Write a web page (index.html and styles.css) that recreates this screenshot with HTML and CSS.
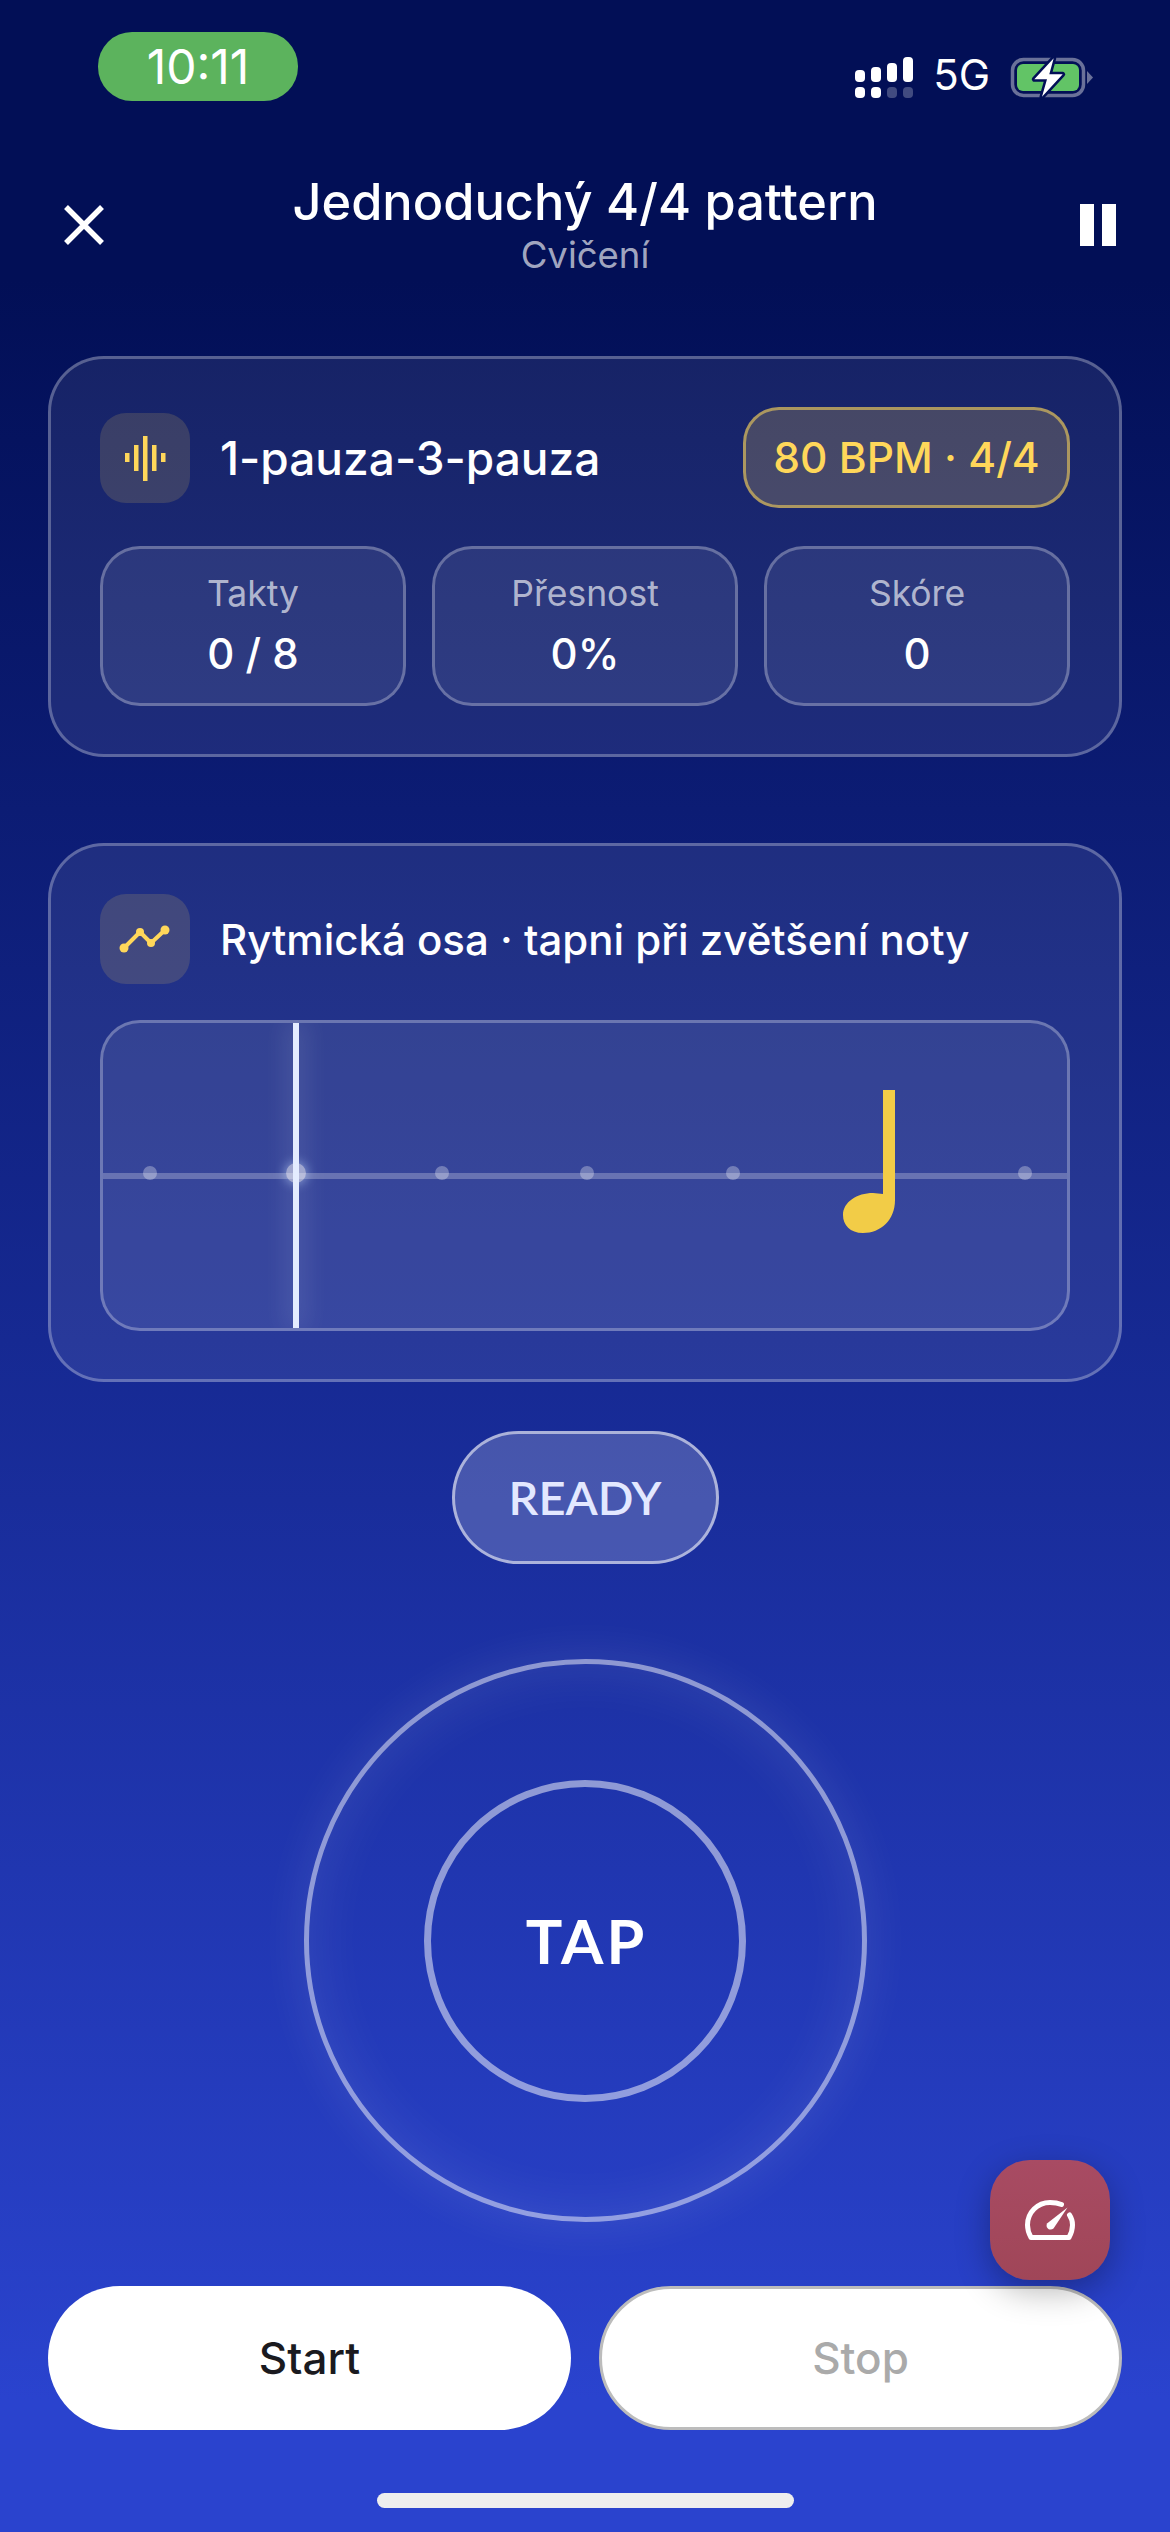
FILE: index.html
```html
<!DOCTYPE html>
<html>

<head>
	<meta charset="UTF-8">
	<title>Jednoduchý 4/4 pattern</title>
	<link rel="stylesheet" href="styles.css">
</head>

<body>
	<div class="screen">
		<div class="status">
			<div class="time">10:11</div>
			<div class="status-right">
				<svg class="signal" width="58" height="41" viewBox="0 0 58 41">
					<rect x="0" y="13" width="10" height="12" rx="4" fill="#fff" />
					<rect x="16" y="10" width="10" height="15" rx="4" fill="#fff" />
					<rect x="32" y="6" width="10" height="19" rx="4" fill="#fff" />
					<rect x="48" y="0" width="10" height="25" rx="4" fill="#fff" />
					<rect x="0" y="30" width="10" height="11" rx="4" fill="#fff" />
					<rect x="16" y="30" width="10" height="11" rx="4" fill="#fff" />
					<rect x="32" y="30" width="10" height="11" rx="4" fill="#fff" fill-opacity=".25" />
					<rect x="48" y="30" width="10" height="11" rx="4" fill="#fff" fill-opacity=".25" />
				</svg>
				<span class="net">5G</span>
				<svg class="battery" width="90" height="50" viewBox="0 0 90 50">
					<rect x="5.5" y="7.5" width="71" height="36" rx="11" fill="none" stroke="#6a7199" stroke-width="3.5" />
					<rect x="10" y="12" width="62" height="27" rx="6" fill="#62c466" />
					<path d="M80 19 L86 25.5 L80 32 Z" fill="#6a7199" />
					<path d="M46.7 6.3 L27.3 27.3 H40 L35 44.7 L55.7 22.3 H42.3 Z" fill="#fff" stroke="#020f56" stroke-width="5" stroke-linejoin="round" paint-order="stroke" />
				</svg>
			</div>
		</div>

		<div class="header">
			<svg class="close" width="42" height="42" viewBox="0 0 42 42">
				<path d="M3 3 L39 39 M39 3 L3 39" stroke="#fff" stroke-width="5.5" fill="none" />
			</svg>
			<div class="heading">
				<div class="heading-title">Jednoduchý 4/4 pattern</div>
				<div class="heading-sub">Cvičení</div>
			</div>
			<div class="pause"><span></span><span></span></div>
		</div>

		<div class="card">
			<div class="row">
				<div class="row-left">
					<div class="icon-box">
						<svg width="90" height="90" viewBox="0 0 90 90">
							<rect x="25" y="40" width="4.5" height="9" fill="#ffd75a" />
							<rect x="34" y="32" width="4.5" height="26" fill="#ffd75a" />
							<rect x="43" y="23" width="4.5" height="45" fill="#ffd75a" />
							<rect x="52" y="32" width="4.5" height="26" fill="#ffd75a" />
							<rect x="61" y="40" width="4.5" height="9" fill="#ffd75a" />
						</svg>
					</div>
					<div class="row-title">1-pauza-3-pauza</div>
				</div>
				<div class="chip">80 BPM · 4/4</div>
			</div>
			<div class="stats">
				<div class="stat">
					<div class="stat-label">Takty</div>
					<div class="stat-value">0 / 8</div>
				</div>
				<div class="stat">
					<div class="stat-label">Přesnost</div>
					<div class="stat-value">0%</div>
				</div>
				<div class="stat">
					<div class="stat-label">Skóre</div>
					<div class="stat-value">0</div>
				</div>
			</div>
		</div>

		<div class="card card-axis">
			<div class="row-left">
				<div class="icon-box">
					<svg width="90" height="90" viewBox="0 0 90 90">
						<path d="M24 54 L40 38 L51 49 L65 36" fill="none" stroke="#ffd75a" stroke-width="4" stroke-linejoin="round" />
						<circle cx="24" cy="54" r="4.5" fill="#ffd75a" />
						<circle cx="40" cy="38" r="4" fill="#ffd75a" />
						<circle cx="51" cy="49" r="4" fill="#ffd75a" />
						<circle cx="65" cy="36" r="4.5" fill="#ffd75a" />
					</svg>
				</div>
				<div class="row-title row-title-small">Rytmická osa · tapni při zvětšení noty</div>
			</div>
			<div class="track">
				<div class="track-line"></div>
				<div class="beats">
					<span class="beat"></span>
					<span class="beat beat-now"></span>
					<span class="beat"></span>
					<span class="beat"></span>
					<span class="beat"></span>
					<span class="beat beat-off"></span>
					<span class="beat"></span>
				</div>
				<div class="cursor"></div>
				<svg class="note" width="52" height="143" viewBox="0 0 52 143">
					<path d="M40 0 H52 V110 C52 130 38 143 20 143 C7 143 0 135 0 125 C0 112 14 103 30 103 L40 104 Z" fill="#f2cc47" />
				</svg>
			</div>
		</div>

		<div class="ready">READY</div>

		<div class="tap-outer">
			<div class="tap-inner">TAP</div>
		</div>

		<div class="buttons">
			<div class="btn btn-start">Start</div>
			<div class="btn btn-stop">Stop</div>
		</div>

		<div class="home-bar"></div>

		<div class="fab">
			<svg width="120" height="120" viewBox="0 0 120 120">
				<path d="M71.5 44.5 C68 43 64.500 42.500 60 42.500 C47.500 42.500 37.500 52.500 37.500 65 C37.500 69 38.500 73 41 77.500 H79 C81.500 73 82.500 69 82.500 65 C82.500 61.500 81.500 58 79.500 55" fill="none" stroke="#fff" stroke-width="5" stroke-linecap="round" stroke-linejoin="round" />
				<path d="M77.500 47.500 L63.500 68.500 C60 71.500 55 68 57 63.500 Z" fill="#fff" />
			</svg>
		</div>
	</div>
</body>

</html>
```
FILE: styles.css
```css
* {
	padding: 0;
	margin: 0;
	box-sizing: border-box;
}

body {
	width: 1170px;
	height: 2532px;
	overflow: hidden;
	font-family: "Inter", "Noto Sans", sans-serif;
	color: #fff;
}

.screen {
	position: relative;
	width: 1170px;
	height: 2532px;
	padding: 32px 48px 0;
	display: flex;
	flex-direction: column;
	background: linear-gradient(180deg, #020f56 0, #020f56 280px, #2a43ce 2400px);
}

/* status bar */
.status {
	height: 69px;
	padding: 0 25px 0 50px;
	display: flex;
	justify-content: space-between;
}

.time {
	width: 200px;
	height: 69px;
	border-radius: 34px;
	background: #5cb35d;
	text-align: center;
	font-size: 48px;
	line-height: 69px;
	font-weight: 400;
}

.status-right {
	display: flex;
	align-items: flex-start;
	padding-top: 20px;
}

.signal {
	margin-top: 5px;
}

.net {
	margin-left: 20px;
	font-size: 42px;
	line-height: 46px;
	font-weight: 400;
}

.battery {
	margin-left: 17px;
}

/* header */
.header {
	height: 100px;
	margin: 73px 0 82px;
	display: grid;
	grid-template-columns: 1fr auto 1fr;
	align-items: center;
}

.close {
	margin-left: 15px;
}

.heading {
	text-align: center;
}

.heading-title {
	font-size: 50.500px;
	line-height: 56px;
	font-weight: 500;
}

.heading-sub {
	margin-top: 5px;
	font-size: 36.500px;
	line-height: 40px;
	color: rgba(255, 255, 255, 0.65);
}

.pause {
	justify-self: end;
	margin-right: 6px;
	display: flex;
	gap: 8px;
}

.pause span {
	width: 14px;
	height: 42px;
	background: #fff;
}

/* cards */
.card {
	padding: 48px 49px;
	border: 3px solid rgba(255, 255, 255, 0.28);
	border-radius: 56px;
	background: rgba(255, 255, 255, 0.08);
}

.card-axis {
	margin-top: 86px;
}

.row {
	display: flex;
	justify-content: space-between;
	align-items: center;
}

.row-left {
	display: flex;
	align-items: center;
	gap: 30px;
}

.icon-box {
	width: 90px;
	height: 90px;
	border-radius: 26px;
	background: rgba(255, 217, 90, 0.15);
}

.row-title {
	font-size: 46px;
	font-weight: 500;
}

.row-title-small {
	font-size: 42px;
}

.chip {
	width: 327px;
	height: 101px;
	border: 3px solid rgba(255, 217, 90, 0.55);
	border-radius: 36px;
	background: rgba(255, 217, 90, 0.2);
	color: #ffd75a;
	text-align: center;
	font-size: 42.500px;
	line-height: 95px;
	font-weight: 500;
}

.stats {
	margin-top: 38px;
	display: flex;
	gap: 26px;
}

.stat {
	flex: 1;
	height: 160px;
	border: 3px solid rgba(255, 255, 255, 0.28);
	border-radius: 40px;
	background: rgba(255, 255, 255, 0.08);
	text-align: center;
}

.stat-label {
	margin-top: 23px;
	font-size: 35.500px;
	line-height: 44px;
	color: rgba(255, 255, 255, 0.65);
}

.stat-value {
	margin-top: 13px;
	font-size: 42px;
	line-height: 50px;
	font-weight: 500;
}

/* rhythm axis */
.track {
	position: relative;
	height: 311px;
	margin-top: 36px;
	border: 3px solid rgba(255, 255, 255, 0.28);
	border-radius: 40px;
	background: rgba(255, 255, 255, 0.08);
	overflow: hidden;
}

.track-line {
	position: absolute;
	left: 0;
	right: 0;
	top: 150px;
	height: 6px;
	background: rgba(255, 255, 255, 0.25);
}

.beats {
	position: absolute;
	left: 40px;
	right: 35px;
	top: 140px;
	height: 20px;
	display: flex;
	justify-content: space-between;
	align-items: center;
}

.beat {
	width: 14px;
	height: 14px;
	border-radius: 50%;
	background: rgba(255, 255, 255, 0.3);
}

.beat-now {
	width: 20px;
	height: 20px;
	margin: 0 -3px;
	background: rgba(255, 255, 255, 0.5);
	box-shadow: 0 0 12px rgba(190, 215, 255, 0.7);
}

.beat-off {
	visibility: hidden;
}

.cursor {
	position: absolute;
	left: 190px;
	top: 0;
	bottom: 0;
	width: 6px;
	background: #e4ecff;
	box-shadow: 0 0 26px 4px rgba(255, 255, 255, 0.16);
}

.note {
	position: absolute;
	left: 740px;
	top: 67px;
}

/* ready pill and tap target */
.ready {
	width: 267px;
	height: 133px;
	margin: 49px auto 0;
	border: 3px solid rgba(255, 255, 255, 0.55);
	border-radius: 67px;
	background: rgba(255, 255, 255, 0.2);
	color: #e3e8ff;
	text-align: center;
	font-family: "Lato", sans-serif;
	font-size: 47px;
	line-height: 127px;
	font-weight: 600;
}

.tap-outer {
	width: 563px;
	height: 563px;
	margin: 95px auto 0;
	border: 5px solid rgba(255, 255, 255, 0.5);
	border-radius: 50%;
	display: flex;
	align-items: center;
	justify-content: center;
	box-shadow: 0 0 50px rgba(255, 255, 255, 0.1), inset 0 0 60px rgba(255, 255, 255, 0.1);
}

.tap-inner {
	width: 322px;
	height: 322px;
	padding-left: 3px;
	border: 7px solid rgba(255, 255, 255, 0.5);
	border-radius: 50%;
	text-align: center;
	font-family: "Lato", sans-serif;
	font-size: 61px;
	line-height: 308px;
	font-weight: 700;
	letter-spacing: 3px;
}

/* bottom buttons */
.buttons {
	margin-top: 64px;
	display: flex;
	justify-content: space-between;
}

.btn {
	width: 523px;
	height: 144px;
	border-radius: 72px;
	background: #fff;
	text-align: center;
	font-size: 44px;
	line-height: 144px;
	font-weight: 500;
}

.btn-start {
	color: #1a1a1f;
}

.btn-stop {
	border: 3px solid #bcbcbc;
	color: #aaa;
	line-height: 138px;
}

.home-bar {
	width: 417px;
	height: 15px;
	margin: 63px auto 0;
	border-radius: 8px;
	background: #eee;
}

.fab {
	position: absolute;
	right: 60px;
	top: 2160px;
	width: 120px;
	height: 120px;
	border-radius: 40px;
	background: linear-gradient(180deg, #a84b63, #a04658);
	box-shadow: 0 10px 34px rgba(0, 0, 0, 0.3);
}
```
